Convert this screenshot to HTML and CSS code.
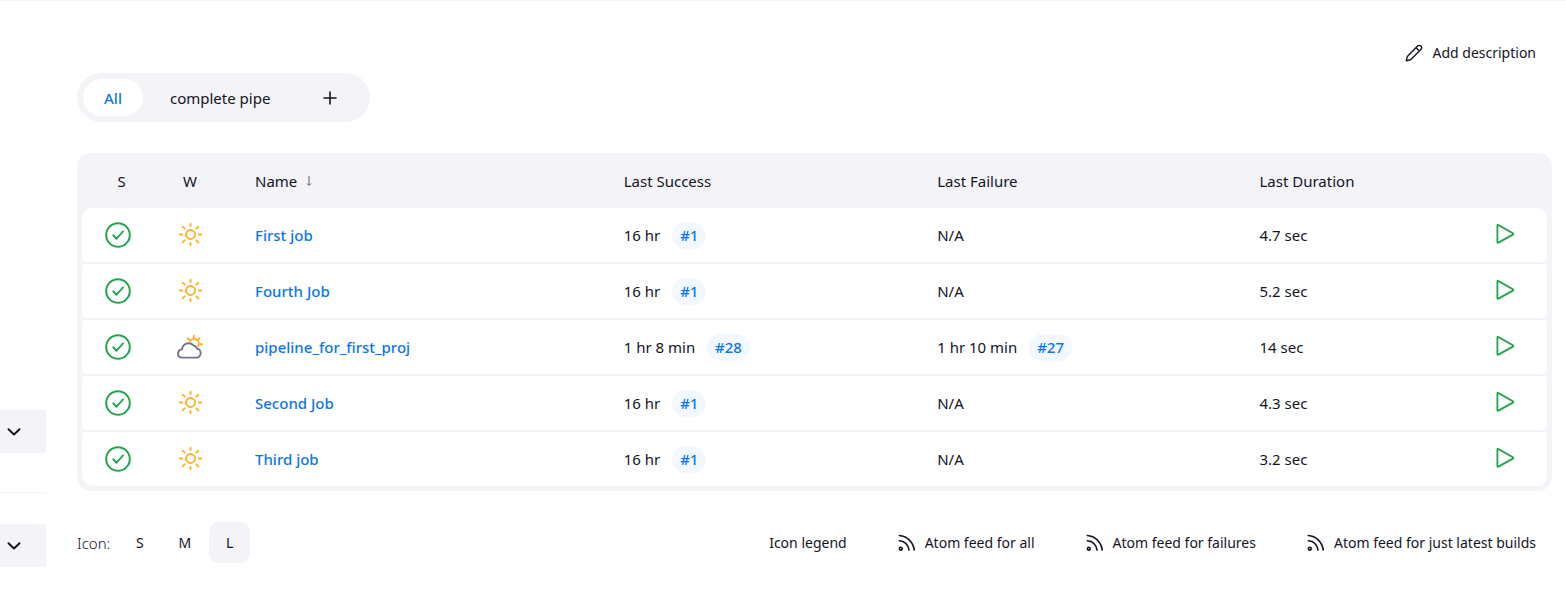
FILE: index.html
```html
<!DOCTYPE html>
<html lang="en">
<head>
<meta charset="utf-8">
<meta name="viewport" content="width=device-width, initial-scale=1">
<title>Dashboard</title>
<link rel="stylesheet" href="styles.css">
</head>
<body>
<svg class="sprite" aria-hidden="true">
  <symbol id="ok" viewBox="0 0 26 26"><circle cx="13" cy="13" r="11.8" fill="none" stroke="#1ea64b" stroke-width="2"/><path d="M8.200 13.200l3.100 3.700 6.800-7.600" fill="none" stroke="#1ea64b" stroke-width="1.800" stroke-linecap="round" stroke-linejoin="round"/></symbol>
  <symbol id="sun" viewBox="0 0 26 26"><g fill="none" stroke="#ffb027" stroke-width="1.900" stroke-linecap="round"><circle cx="13.500" cy="12.500" r="4.500"/><path d="M13.500 1.700v2.400M13.500 20.900v2.400M2.700 12.500h2.400M21.900 12.500h2.400M5.700 4.700l2 2M19.300 18.300l2 2M21.300 4.700l-2 2M7.700 18.300l-2 2"/></g></symbol>
  <symbol id="cloudy" viewBox="0 0 28 26"><g fill="none" stroke-width="1.900" stroke-linecap="round" stroke-linejoin="round"><path stroke="#ffb027" d="M14 7.100a4.700 4.700 0 0 1 8 5.100M17.800 1.600v2.200M11.700 4.200l1.400 1.300M23.600 4.200l-1.600 1.600M23.800 10.200h2.300"/><path stroke="#72728c" d="M5 23.600h14.600a4.600 4.600 0 0 0 1.300-9.100 5 5 0 0 0-3.400-3.100 6.700 6.700 0 0 0-11.500 4A4.200 4.200 0 0 0 5 23.600z"/></g></symbol>
  <symbol id="play" viewBox="0 0 20 22"><path d="M2.400 2.600v16.400q0 1.200 1 .6l14.500-8q.9-.7 0-1.400L3.400 2.100q-1-.6-1 .5z" fill="none" stroke="#1ea64b" stroke-width="1.800" stroke-linejoin="round"/></symbol>
  <symbol id="rss" viewBox="0 0 18 18"><g fill="none" stroke="currentColor" stroke-width="1.600" stroke-linecap="round"><circle cx="2.800" cy="14.700" r="1.400"/><path d="M1.300 1.500C9 2 15 8 16.300 16M1.300 6.700C6.500 7 10 10.500 11 16"/></g></symbol>
  <symbol id="chevron" viewBox="0 0 14 8"><path d="M1.500 1.200L7 6.500l5.500-5.300" fill="none" stroke="currentColor" stroke-width="1.900" stroke-linecap="round" stroke-linejoin="round"/></symbol>
</svg>
<div class="page">
  <aside class="side">
    <button class="side-toggle" aria-label="Toggle build queue"><svg width="14" height="8"><use href="#chevron"/></svg></button>
    <hr class="side-rule">
    <button class="side-toggle" aria-label="Toggle build executors"><svg width="14" height="8"><use href="#chevron"/></svg></button>
  </aside>
  <main class="main">
    <div class="top">
      <button class="link-button"><svg width="18" height="18" viewBox="0 0 18 18" fill="none" stroke="currentColor" stroke-width="1.400" stroke-linejoin="round"><path d="M1.300 16.700l1-4.300L12.600 2.100a2.300 2.300 0 0 1 3.300 3.300L5.600 15.700zM11 3.700L14.300 7"/></svg>Add description</button>
    </div>
    <nav class="tabs">
      <a class="tab tab-active" href="#">All</a>
      <a class="tab" href="#">complete pipe</a>
      <a class="tab tab-new" href="#" aria-label="New view"><svg width="14" height="14" viewBox="0 0 14 14" fill="none" stroke="currentColor" stroke-width="1.600" stroke-linecap="round"><path d="M7 1v12M1 7h12"/></svg></a>
    </nav>
    <div class="table-wrap">
      <table class="jobs">
        <thead>
          <tr><th class="status">S</th><th class="weather">W</th><th class="name"><span class="sorted">Name <svg width="8" height="10" viewBox="0 0 8 10" fill="none" stroke="currentColor"><path d="M4 0v9M2 7.500l2 2 2-2"/></svg></span></th><th class="success">Last Success</th><th class="failure">Last Failure</th><th>Last Duration</th><th class="run"></th></tr>
        </thead>
        <tbody>
          <tr><td class="status"><svg width="26" height="26"><use href="#ok"/></svg></td><td class="weather"><svg width="26" height="26"><use href="#sun"/></svg></td><td class="name"><a href="#">First job</a></td><td>16 hr <a class="build" href="#">#1</a></td><td>N/A</td><td>4.7 sec</td><td class="run"><button aria-label="Build First job"><svg width="20" height="22"><use href="#play"/></svg></button></td></tr>
          <tr><td class="status"><svg width="26" height="26"><use href="#ok"/></svg></td><td class="weather"><svg width="26" height="26"><use href="#sun"/></svg></td><td class="name"><a href="#">Fourth Job</a></td><td>16 hr <a class="build" href="#">#1</a></td><td>N/A</td><td>5.2 sec</td><td class="run"><button aria-label="Build Fourth Job"><svg width="20" height="22"><use href="#play"/></svg></button></td></tr>
          <tr><td class="status"><svg width="26" height="26"><use href="#ok"/></svg></td><td class="weather"><svg width="28" height="26"><use href="#cloudy"/></svg></td><td class="name"><a href="#">pipeline_for_first_proj</a></td><td>1 hr 8 min <a class="build" href="#">#28</a></td><td>1 hr 10 min <a class="build" href="#">#27</a></td><td>14 sec</td><td class="run"><button aria-label="Build pipeline_for_first_proj"><svg width="20" height="22"><use href="#play"/></svg></button></td></tr>
          <tr><td class="status"><svg width="26" height="26"><use href="#ok"/></svg></td><td class="weather"><svg width="26" height="26"><use href="#sun"/></svg></td><td class="name"><a href="#">Second Job</a></td><td>16 hr <a class="build" href="#">#1</a></td><td>N/A</td><td>4.3 sec</td><td class="run"><button aria-label="Build Second Job"><svg width="20" height="22"><use href="#play"/></svg></button></td></tr>
          <tr><td class="status"><svg width="26" height="26"><use href="#ok"/></svg></td><td class="weather"><svg width="26" height="26"><use href="#sun"/></svg></td><td class="name"><a href="#">Third job</a></td><td>16 hr <a class="build" href="#">#1</a></td><td>N/A</td><td>3.2 sec</td><td class="run"><button aria-label="Build Third job"><svg width="20" height="22"><use href="#play"/></svg></button></td></tr>
        </tbody>
      </table>
    </div>
    <footer class="foot">
      <div class="sizes"><span class="sizes-label">Icon:</span><button class="size">S</button><button class="size">M</button><button class="size size-active">L</button></div>
      <div class="feeds">
        <a href="#">Icon legend</a>
        <a href="#"><svg width="18" height="18"><use href="#rss"/></svg>Atom feed for all</a>
        <a href="#"><svg width="18" height="18"><use href="#rss"/></svg>Atom feed for failures</a>
        <a href="#"><svg width="18" height="18"><use href="#rss"/></svg>Atom feed for just latest builds</a>
      </div>
    </footer>
  </main>
</div>
</body>
</html>
```
FILE: styles.css
```css
* { box-sizing: border-box; }
body {
  margin: 0;
  background: #fff;
  color: #14141f;
  font: 14px/20px "Noto Sans", "Open Sans", sans-serif;
}
button {
  padding: 0;
  border: 0;
  background: none;
  color: inherit;
  font: inherit;
  cursor: pointer;
}
a { color: inherit; text-decoration: none; }
svg { display: block; flex: none; }
.sprite { position: absolute; width: 0; height: 0; }
.page {
  display: flex;
  min-height: 100vh;
  border-top: 1px solid #f3f3f8;
}
.side {
  display: flex;
  flex: none;
  flex-direction: column;
  justify-content: flex-end;
  width: 46px;
  padding-bottom: 33px;
}
.side-toggle {
  display: flex;
  align-items: center;
  height: 43px;
  padding-left: 7px;
  background: #f3f3f8;
}
.side-rule {
  width: 100%;
  height: 1px;
  margin: 39px 0 31px;
  border: 0;
  background: #f3f3f8;
}
.main {
  flex: 1;
  min-width: 0;
  padding: 32px 14px 0 31px;
}
.top { display: flex; justify-content: flex-end; padding-right: 16px; }
.link-button { display: flex; align-items: center; gap: 9px; height: 40px; }
.tabs {
  display: flex;
  width: fit-content;
  padding: 6px;
  border-radius: 25px;
  background: #f3f3f8;
  font-size: 15px;
}
.tab {
  display: flex;
  align-items: center;
  height: 37px;
  padding: 0 27px;
  border-radius: 19px;
}
.tab-active { padding: 0 21px; background: #fff; color: #0b76ea; font-weight: 500; }
.tab-new { padding-left: 26px; }
.table-wrap {
  margin-top: 31px;
  padding: 0 5px 3px;
  border-radius: 14px;
  background: #f3f3f8;
}
.jobs {
  width: 100%;
  border-spacing: 0 2px;
  table-layout: fixed;
  font-size: 15px;
}
th, td { padding: 0 16px 0 15px; text-align: left; white-space: nowrap; }
th { height: 51px; font-weight: 400; }
td { height: 54px; background: #fff; }
td:first-child { border-radius: 4px 0 0 4px; }
td:last-child { border-radius: 0 4px 4px 0; }
tbody tr:first-child td:first-child { border-top-left-radius: 10px; }
tbody tr:first-child td:last-child { border-top-right-radius: 10px; }
tbody tr:last-child td:first-child { border-bottom-left-radius: 10px; }
tbody tr:last-child td:last-child { border-bottom-right-radius: 10px; }
.status { width: 79px; padding: 0; text-align: center; }
td.status { padding-left: 23px; }
.weather { width: 58px; padding: 0; text-align: center; }
td.weather svg { margin: 0 auto; }
.name { width: 26.6%; padding-left: 36px; }
.name a { color: #0b76ea; font-weight: 500; }
.sorted { display: flex; align-items: center; gap: 8px; }
.sorted svg { color: #5c5c6b; }
.success { width: 21.4%; }
.failure { width: 22%; }
.build {
  display: inline-block;
  margin-left: 8px;
  padding: 3px 8px 4px;
  border-radius: 14px;
  background: #f2f8ff;
  color: #0b76ea;
  font-weight: 500;
}
.run { width: 84px; padding: 0 0 2px; }
.run button { display: block; margin: 0 auto; }
.foot {
  display: flex;
  align-items: center;
  justify-content: space-between;
  margin-top: 31px;
  padding-right: 16px;
}
.sizes { display: flex; align-items: center; gap: 4px; }
.sizes-label { margin-right: 5px; font-size: 15px; font-weight: 300; }
.size { width: 41px; height: 41px; border-radius: 10px; }
.size-active { background: #f3f3f8; }
.feeds { display: flex; gap: 51px; }
.feeds a { display: flex; align-items: center; gap: 9px; }
```
